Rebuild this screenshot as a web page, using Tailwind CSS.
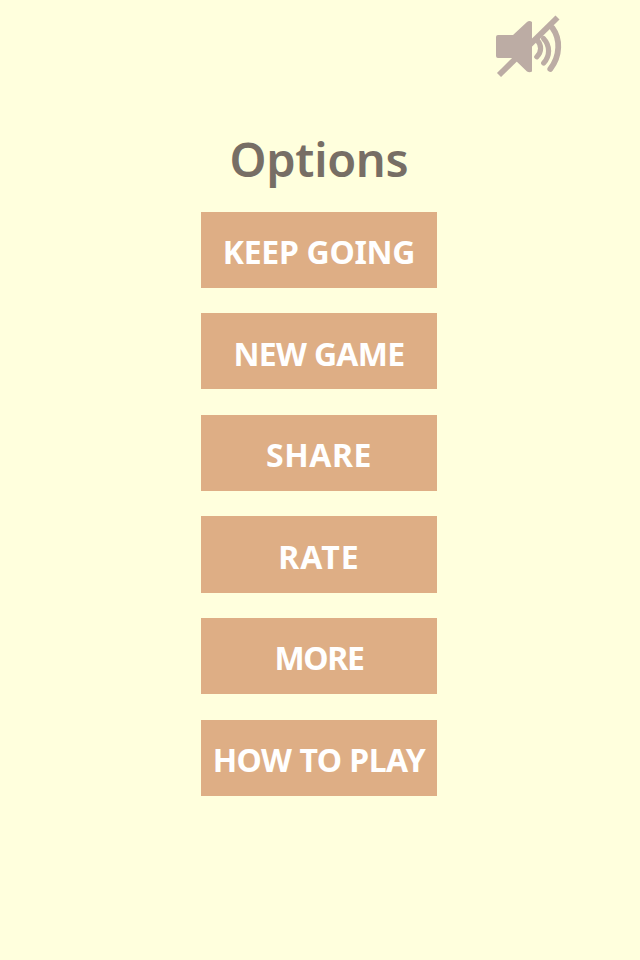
<!DOCTYPE html>
<html lang="en">
<head>
  <meta charset="UTF-8">
  <meta name="viewport" content="width=device-width, initial-scale=1.0">
  <title>Options</title>
  <script src="https://cdn.jsdelivr.net/npm/@tailwindcss/browser@4"></script>
</head>
<body class="bg-[#ffffdd] min-h-screen flex flex-col font-['Noto_Sans',sans-serif]">

  <!-- Sound toggle -->
  <header class="flex justify-end pt-[5px] pr-[65px]">
    <button type="button" aria-label="Sound off" class="block">
      <svg class="block w-[90px] h-20 text-[#bcaca4]" viewBox="0 0 90 80" fill="none" stroke="currentColor">
        <path d="M14 70L72.500 12.500" stroke-width="5.800" />
        <path d="M13 30h15L42 17q2.500-2 5 0v49.500q-2.500 1.500-5 0L28 53H13q-2 0-2-2V32q0-2 2-2z" fill="currentColor" stroke="none" />
        <g stroke-width="5.200" stroke-linecap="round">
          <path d="M52.500 35.500C56.500 40 57 47 51.800 51.800" />
          <path d="M58.500 33.500C65.500 41 65 51 58.700 58" />
          <path d="M67.500 23C75.500 34 75.500 50.500 65.300 64" stroke-width="5.800" />
        </g>
      </svg>
    </button>
  </header>

  <!-- Menu -->
  <main class="flex flex-col items-center pr-[2px]">
    <h1 class="mt-[42px] h-[84.7px] text-[47px] leading-[64px] tracking-[-0.3px] font-semibold text-[#776e65]">Options</h1>
    <nav class="flex flex-col gap-[25.4px] w-[236px] text-white text-[32px] font-bold">
      <button type="button" class="h-[76.2px] pt-1 bg-[#deae85] whitespace-nowrap tracking-[-0.3px]">KEEP GOING</button>
      <button type="button" class="h-[76.2px] pt-[5px] bg-[#deae85] whitespace-nowrap tracking-[-0.7px]">NEW GAME</button>
      <button type="button" class="h-[76.2px] pt-1 bg-[#deae85] whitespace-nowrap tracking-[0.6px]">SHARE</button>
      <button type="button" class="h-[76.2px] pt-[5px] bg-[#deae85] whitespace-nowrap tracking-[1.1px]">RATE</button>
      <button type="button" class="h-[76.2px] pt-1 bg-[#deae85] whitespace-nowrap tracking-[-1.3px]">MORE</button>
      <button type="button" class="h-[76.2px] pt-1 bg-[#deae85] whitespace-nowrap tracking-[-0.5px]">HOW TO PLAY</button>
    </nav>
  </main>

</body>
</html>
